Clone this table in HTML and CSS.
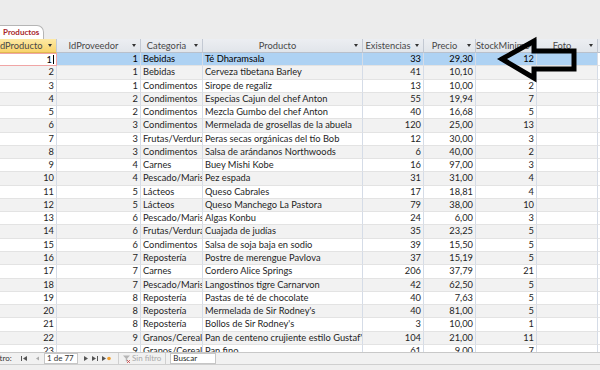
FILE: index.html
```html
<!DOCTYPE html>
<html lang="es">
<head>
<meta charset="utf-8">
<title>Productos</title>
<link rel="stylesheet" href="styles.css">
</head>
<body>
<div class="screen">
  <div class="top"></div>
  <div class="tabs"><div class="tab">Productos</div></div>
  <div class="sheet">
    <div class="grid">
      <div class="head">
        <div class="hd selcol">IdProducto<i class="dd"></i></div>
        <div class="hd">IdProveedor<i class="dd"></i></div>
        <div class="hd">Categoria<i class="dd"></i></div>
        <div class="hd">Producto<i class="dd"></i></div>
        <div class="hd">Existencias<i class="dd"></i></div>
        <div class="hd">Precio<i class="dd"></i></div>
        <div class="hd">StockMinimo<i class="dd"></i></div>
        <div class="hd">Foto<i class="dd"></i></div>
        <div class="hd blank"></div>
      </div>
      <div class="row sel"><span class="n cur">1<i class="caret"></i></span><span class="n">1</span><span>Bebidas</span><span>Té Dharamsala</span><span class="n">33</span><span class="n">29,30</span><span class="n">12</span><span></span><span class="x"></span></div>
      <div class="row"><span class="n">2</span><span class="n">1</span><span>Bebidas</span><span>Cerveza tibetana Barley</span><span class="n">41</span><span class="n">10,10</span><span class="n"></span><span></span><span class="x"></span></div>
      <div class="row"><span class="n">3</span><span class="n">1</span><span>Condimentos</span><span>Sirope de regaliz</span><span class="n">13</span><span class="n">10,00</span><span class="n">2</span><span></span><span class="x"></span></div>
      <div class="row"><span class="n">4</span><span class="n">2</span><span>Condimentos</span><span>Especias Cajun del chef Anton</span><span class="n">55</span><span class="n">19,94</span><span class="n">7</span><span></span><span class="x"></span></div>
      <div class="row"><span class="n">5</span><span class="n">2</span><span>Condimentos</span><span>Mezcla Gumbo del chef Anton</span><span class="n">40</span><span class="n">16,68</span><span class="n">5</span><span></span><span class="x"></span></div>
      <div class="row"><span class="n">6</span><span class="n">3</span><span>Condimentos</span><span>Mermelada de grosellas de la abuela</span><span class="n">120</span><span class="n">25,00</span><span class="n">13</span><span></span><span class="x"></span></div>
      <div class="row"><span class="n">7</span><span class="n">3</span><span>Frutas/Verduras</span><span>Peras secas orgánicas del tío Bob</span><span class="n">12</span><span class="n">30,00</span><span class="n">3</span><span></span><span class="x"></span></div>
      <div class="row"><span class="n">8</span><span class="n">3</span><span>Condimentos</span><span>Salsa de arándanos Northwoods</span><span class="n">6</span><span class="n">40,00</span><span class="n">2</span><span></span><span class="x"></span></div>
      <div class="row"><span class="n">9</span><span class="n">4</span><span>Carnes</span><span>Buey Mishi Kobe</span><span class="n">16</span><span class="n">97,00</span><span class="n">3</span><span></span><span class="x"></span></div>
      <div class="row"><span class="n">10</span><span class="n">4</span><span>Pescado/Marisco</span><span>Pez espada</span><span class="n">31</span><span class="n">31,00</span><span class="n">4</span><span></span><span class="x"></span></div>
      <div class="row"><span class="n">11</span><span class="n">5</span><span>Lácteos</span><span>Queso Cabrales</span><span class="n">17</span><span class="n">18,81</span><span class="n">4</span><span></span><span class="x"></span></div>
      <div class="row"><span class="n">12</span><span class="n">5</span><span>Lácteos</span><span>Queso Manchego La Pastora</span><span class="n">79</span><span class="n">38,00</span><span class="n">10</span><span></span><span class="x"></span></div>
      <div class="row"><span class="n">13</span><span class="n">6</span><span>Pescado/Marisco</span><span>Algas Konbu</span><span class="n">24</span><span class="n">6,00</span><span class="n">3</span><span></span><span class="x"></span></div>
      <div class="row"><span class="n">14</span><span class="n">6</span><span>Frutas/Verduras</span><span>Cuajada de judías</span><span class="n">35</span><span class="n">23,25</span><span class="n">5</span><span></span><span class="x"></span></div>
      <div class="row"><span class="n">15</span><span class="n">6</span><span>Condimentos</span><span>Salsa de soja baja en sodio</span><span class="n">39</span><span class="n">15,50</span><span class="n">5</span><span></span><span class="x"></span></div>
      <div class="row"><span class="n">16</span><span class="n">7</span><span>Repostería</span><span>Postre de merengue Pavlova</span><span class="n">37</span><span class="n">15,19</span><span class="n">5</span><span></span><span class="x"></span></div>
      <div class="row"><span class="n">17</span><span class="n">7</span><span>Carnes</span><span>Cordero Alice Springs</span><span class="n">206</span><span class="n">37,79</span><span class="n">21</span><span></span><span class="x"></span></div>
      <div class="row"><span class="n">18</span><span class="n">7</span><span>Pescado/Marisco</span><span>Langostinos tigre Carnarvon</span><span class="n">42</span><span class="n">62,50</span><span class="n">5</span><span></span><span class="x"></span></div>
      <div class="row"><span class="n">19</span><span class="n">8</span><span>Repostería</span><span>Pastas de té de chocolate</span><span class="n">40</span><span class="n">7,63</span><span class="n">5</span><span></span><span class="x"></span></div>
      <div class="row"><span class="n">20</span><span class="n">8</span><span>Repostería</span><span>Mermelada de Sir Rodney's</span><span class="n">40</span><span class="n">81,00</span><span class="n">5</span><span></span><span class="x"></span></div>
      <div class="row"><span class="n">21</span><span class="n">8</span><span>Repostería</span><span>Bollos de Sir Rodney's</span><span class="n">3</span><span class="n">10,00</span><span class="n">1</span><span></span><span class="x"></span></div>
      <div class="row"><span class="n">22</span><span class="n">9</span><span>Granos/Cereales</span><span>Pan de centeno crujiente estilo Gustaf's</span><span class="n">104</span><span class="n">21,00</span><span class="n">11</span><span></span><span class="x"></span></div>
      <div class="row"><span class="n">23</span><span class="n">9</span><span>Granos/Cereales</span><span>Pan fino</span><span class="n">61</span><span class="n">9,00</span><span class="n">7</span><span></span><span class="x"></span></div>
    </div>
  </div>
  <div class="nav">
    <span class="lbl">Registro:</span>
    <svg class="ic first" width="7" height="7" viewBox="0 0 7 7"><rect x="0" y="1" width="1" height="5" fill="#555"/><polygon points="6,1 2,3.5 6,6" fill="#555"/></svg>
    <svg class="ic prev" width="5" height="7" viewBox="0 0 5 7"><polygon points="4,1.5 1,3.5 4,5.5" fill="#aaa"/></svg>
    <span class="box rec">1 de 77</span>
    <svg class="ic next" width="5" height="7" viewBox="0 0 5 7"><polygon points="1,1 5,3.5 1,6" fill="#555"/></svg>
    <svg class="ic last" width="7" height="7" viewBox="0 0 7 7"><polygon points="0,1 4,3.5 0,6" fill="#555"/><rect x="5" y="1" width="1" height="5" fill="#555"/></svg>
    <svg class="ic new" width="9" height="7" viewBox="0 0 9 7"><polygon points="0,1 4,3.5 0,6" fill="#555"/><circle cx="7" cy="3.5" r="1.8" fill="#f0a030"/></svg>
    <span class="filter"><svg width="7" height="8" viewBox="0 0 7 8"><polygon points="0,0.5 7,0.5 4.2,3.6 4.2,7 2.8,6 2.8,3.6" fill="#b5b5b5"/><path d="M4 5 L7 8 M7 5 L4 8" stroke="#c44" stroke-width="0.8"/></svg>Sin filtro</span>
    <span class="box search">Buscar</span>
  </div>
  <div class="foot"></div>
  <svg class="arrow" width="100" height="60" viewBox="0 0 100 60" aria-hidden="true">
    <polygon points="15,28 47,10 47,20 87,20 87,38 47,38 47,47" fill="none" stroke="#000" stroke-width="5" stroke-linejoin="miter"/>
  </svg>
</div>
</body>
</html>
```
FILE: styles.css
```css
* { box-sizing: border-box; margin: 0; padding: 0; }
html, body { width: 600px; height: 370px; overflow: hidden; }
body {
  font-family: Lato, "Open Sans", "Liberation Sans", sans-serif;
  font-size: 9.3px;
  color: #1e1e1e;
  background: #ececec;
}
.screen {
  position: relative;
  width: 600px;
  height: 370px;
  display: flex;
  flex-direction: column;
  overflow: hidden;
}
.top { height: 25px; background: #ececec; flex: none; }
.tabs { height: 14px; flex: none; background: #ececec; display: flex; align-items: flex-end; }
.tab {
  width: 44px;
  height: 14px;
  background: #fff;
  border: 1px solid #b5b5b5;
  border-left: none;
  border-bottom: none;
  border-top-right-radius: 7px;
  color: #a8262c;
  font-weight: bold;
  font-size: 8px;
  line-height: 13px;
  padding-left: 3px;
}
.sheet {
  height: 313px;
  flex: none;
  overflow: hidden;
  background: #fff;
}
.grid { margin-left: -6px; width: 626px; }
.head, .row {
  display: grid;
  grid-template-columns: 63px 84px 62px 160px 61px 52px 61px 61px 22px;
}
.head { height: 14px; }
.hd {
  position: relative;
  background: linear-gradient(#eceef2, #e1e5ea);
  border-right: 1px solid #c3c9d3;
  border-bottom: 1px solid #b9c0cb;
  color: #474747;
  text-align: center;
  padding-right: 10px;
  line-height: 13px;
  white-space: nowrap;
  overflow: hidden;
}
.hd.selcol { background: linear-gradient(#fde9a5, #f9d46c); border-bottom-color: #e0b850; }
.hd.blank { background: #e6e9ee; }
.dd {
  position: absolute;
  right: 4px;
  top: 5px;
  width: 0;
  height: 0;
  border-left: 2.5px solid transparent;
  border-right: 2.5px solid transparent;
  border-top: 3px solid #333;
}
.hd.blank .dd { display: none; }
.row { height: 13.27px; background: #fff; }
.row:nth-child(odd) { background: #f2f2f2; }
.row > span {
  display: block;
  white-space: nowrap;
  overflow: hidden;
  border-right: 1px solid #d5dce7;
  border-bottom: 1px solid #e3e3e3;
  padding: 0 2px;
  line-height: 12.5px;
}
.row > span.n { text-align: right; }
.row > span.x { border-right: none; background: #fff; }
.row.sel { background: #aed2f3; }
.row.sel > span { color: #000; }
.row.sel > span.cur {
  background: #fff;
  border: 1px solid #f0a5a5;
  border-left: none;
  padding-right: 2px;
}
.caret {
  display: inline-block;
  width: 1px;
  height: 9px;
  background: #000;
  vertical-align: -1px;
  margin-left: 1px;
}
.arrow { position: absolute; left: 487px; top: 31px; }
.nav {
  height: 13px;
  flex: none;
  display: flex;
  align-items: center;
  background: #f1f1f1;
  border-top: 1px solid #c8c8c8;
  border-bottom: 1px solid #cfcfcf;
  font-size: 8px;
  line-height: 9px;
  color: #333;
}
.lbl { margin-left: -19px; width: 37px; flex: none; }
.ic { flex: none; display: block; }
.first { margin-left: 3px; }
.prev { margin-left: 7px; }
.box {
  background: #fff;
  border: 1px solid #c6c6c6;
  height: 11px;
  line-height: 9px;
  padding-left: 2px;
  flex: none;
}
.rec { width: 34px; margin-left: 4px; }
.next { margin-left: 5px; }
.last { margin-left: 4px; }
.new { margin-left: 3px; }
.filter {
  display: flex;
  align-items: center;
  gap: 2px;
  color: #a9a9a9;
  margin-left: 7px;
  padding: 0 4px 0 4px;
  height: 11px;
  border-left: 1px solid #d0d0d0;
  border-right: 1px solid #d0d0d0;
}
.search { width: 46px; margin-left: 4px; color: #222; }
.foot { flex: 1; background: #efefef; }
```
